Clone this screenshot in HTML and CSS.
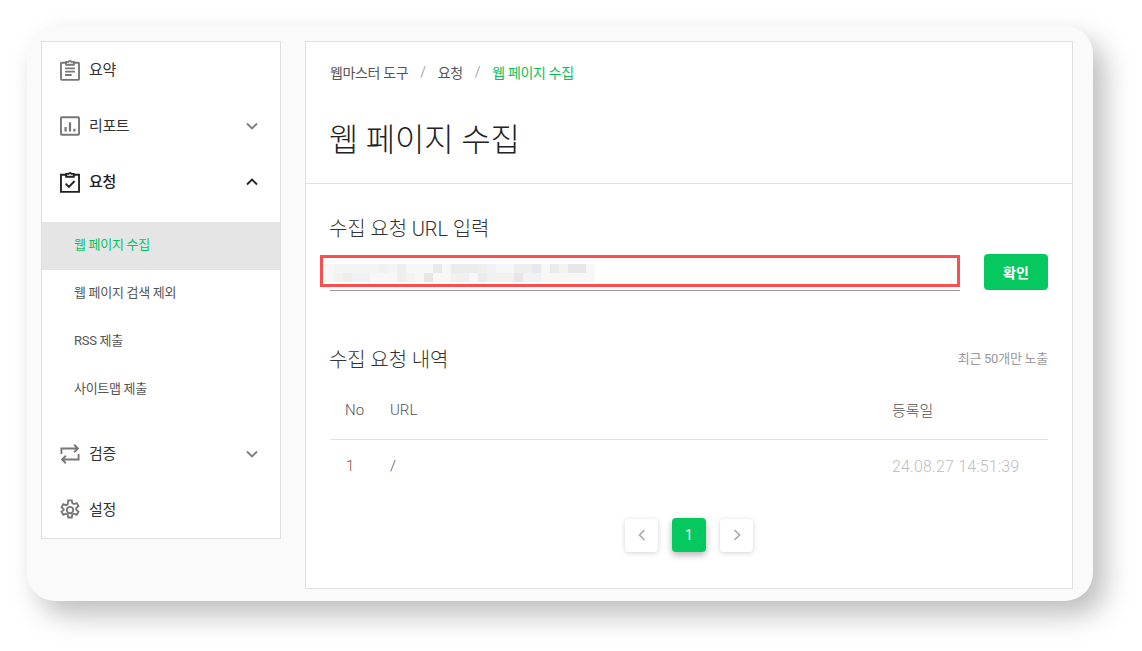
FILE: index.html
```html
<!DOCTYPE html>
<html lang="ko">
<head>
<meta charset="UTF-8">
<title>웹 페이지 수집</title>
<link rel="stylesheet" href="styles.css">
</head>
<body>
<div class="window">
  <nav class="side">
    <a class="row">
      <svg class="ico" viewBox="0 0 20 20"><path d="M6.500 3.400H2.600a.8.8 0 0 0-.8.8v14a.8.8 0 0 0 .8.800h14.800a.8.8 0 0 0 .8-.8v-14a.8.8 0 0 0-.8-.8h-3.900M6.500 2.600h2.200a1.400 1.400 0 0 1 2.600 0h2.200v2.600h-7zM5.500 8.500h9M5.500 11.500h9M5.500 14.500h6"/></svg>
      <span class="label">요약</span>
    </a>
    <a class="row">
      <svg class="ico" viewBox="0 0 20 20"><rect x="1.800" y="2" width="16.400" height="16" rx=".8"/><path d="M6 15v-4M10 15V6.500M14 15v-2.500" stroke-width="2"/></svg>
      <span class="label">리포트</span>
      <svg class="chev" viewBox="0 0 14 10"><path d="M2 2.500l5 5 5-5"/></svg>
    </a>
    <a class="row on">
      <svg class="ico" viewBox="0 0 20 20"><path d="M6.500 3.400H1.800V19h16.400V3.400h-4.700M6.500 2.600h2.200a1.400 1.400 0 0 1 2.600 0h2.200v2.600h-7zM6 11.500l3 3 5.200-5.400"/></svg>
      <span class="label">요청</span>
      <svg class="chev" viewBox="0 0 14 10"><path d="M2 7.500l5-5 5 5"/></svg>
    </a>
    <ul class="sub">
      <li class="cur">웹 페이지 수집</li>
      <li>웹 페이지 검색 제외</li>
      <li>RSS 제출</li>
      <li>사이트맵 제출</li>
    </ul>
    <a class="row">
      <svg class="ico" viewBox="0 0 20 20"><path d="M2.200 10V5h15M13.800 1.600L17.200 5l-3.400 3.400M17.800 10v5h-15M6.200 11.600L2.800 15l3.400 3.400"/></svg>
      <span class="label">검증</span>
      <svg class="chev" viewBox="0 0 14 10"><path d="M2 2.500l5 5 5-5"/></svg>
    </a>
    <a class="row">
      <svg class="ico" viewBox="0 0 20 20"><circle cx="10" cy="10" r="2.900"/><path d="M8.400 1.200h3.200l.5 2.600 1.500.8 2.500-.9 1.600 2.800-2 1.700v1.600l2 1.700-1.600 2.800-2.500-.9-1.500.8-.5 2.600H8.400l-.5-2.600-1.500-.8-2.500.9-1.600-2.800 2-1.700V9.200l-2-1.700 1.600-2.800 2.500.9 1.500-.8z"/></svg>
      <span class="label">설정</span>
    </a>
  </nav>

  <main class="panel">
    <header class="head">
      <div class="crumbs">
        <span>웹마스터 도구</span><i>/</i><span>요청</span><i>/</i><span class="now">웹 페이지 수집</span>
      </div>
      <h1>웹 페이지 수집</h1>
    </header>

    <section class="body">
      <h2>수집 요청 URL 입력</h2>
      <div class="url-row">
        <div class="url-field">
          <svg class="blur" viewBox="0 0 270 18" width="270" height="18">
            <rect width="270" height="18" fill="#f7f7f7"/>
            <rect x="9" width="45" height="9" fill="#f4f4f5"/>
            <rect x="54" width="9" height="9" fill="#f0f1f4"/>
            <rect x="63" width="9" height="9" fill="#f5f5f5"/>
            <rect x="72" width="9" height="18" fill="#eeeeee"/>
            <rect x="108" width="9" height="9" fill="#e9e9e9"/>
            <rect x="126" width="27" height="9" fill="#ececec"/>
            <rect x="153" width="9" height="9" fill="#efefef"/>
            <rect x="162" width="9" height="9" fill="#f1f2f5"/>
            <rect x="189" width="18" height="9" fill="#eeeeee"/>
            <rect x="207" width="9" height="9" fill="#e8e9ee"/>
            <rect x="225" width="9" height="9" fill="#ebebeb"/>
            <rect x="234" width="9" height="9" fill="#f3f3ef"/>
            <rect x="243" width="18" height="9" fill="#e7e7ea"/>
            <rect x="9" y="9" width="9" height="9" fill="#f1f1f1"/>
            <rect x="18" y="9" width="9" height="9" fill="#ededed"/>
            <rect x="27" y="9" width="18" height="9" fill="#f0f1f4"/>
            <rect x="81" y="9" width="9" height="9" fill="#f3f3f3"/>
            <rect x="99" y="9" width="9" height="9" fill="#e6e6e6"/>
            <rect x="126" y="9" width="18" height="9" fill="#f0f0f0"/>
            <rect x="153" y="9" width="9" height="9" fill="#e9ebf0"/>
            <rect x="162" y="9" width="27" height="9" fill="#f1f1f1"/>
            <rect x="189" y="9" width="9" height="9" fill="#e6e6e6"/>
            <rect x="198" y="9" width="18" height="9" fill="#f1f2f5"/>
          </svg>
          <div class="mark"></div>
        </div>
        <button class="ok">확인</button>
      </div>

      <div class="list-head">
        <h2>수집 요청 내역</h2>
        <span class="note">최근 50개만 노출</span>
      </div>

      <div class="tbl">
        <div class="tr th"><span class="c-no">No</span><span class="c-url">URL</span><span class="c-date">등록일</span></div>
        <div class="tr td"><span class="c-no">1</span><span class="c-url">/</span><span class="c-date">24.08.27 14:51:39</span></div>
      </div>

      <div class="pager">
        <a class="pg"><svg viewBox="0 0 10 14"><path d="M7.500 2L2.500 7l5 5"/></svg></a>
        <a class="pg cur">1</a>
        <a class="pg"><svg viewBox="0 0 10 14"><path d="M2.500 2l5 5-5 5"/></svg></a>
      </div>
    </section>
  </main>
</div>
</body>
</html>
```

FILE: styles.css
```css
* { box-sizing:border-box; }
html, body { margin:0; height:651px; background:#fff; overflow:hidden; }
body { padding:26px 49px 50px 27px; font-family:Roboto, "Noto Sans CJK KR", sans-serif; color:#333; }
h1, h2, ul { margin:0; padding:0; font-weight:400; list-style:none; }

.window { display:flex; align-items:flex-start; gap:24px; height:575px; padding:15px 20px 12px 14px; background:#fafafa; border-radius:28px; box-shadow:12px 14px 28px rgba(0,0,0,.26); }

/* sidebar */
.side { flex:none; width:240px; height:498px; background:#fff; border:1px solid #e0e0e0; }
.row { display:flex; align-items:center; height:56px; padding:0 21px 4px 17px; font-size:15px; letter-spacing:-.4px; color:#333; }
.row.on { font-weight:500; color:#222; }
.label { margin-left:8px; flex:1; }
.ico { width:22px; height:22px; margin-top:4px; fill:none; stroke:#777; stroke-width:1.7; }
.on .ico { stroke:#222; }
.chev { width:14px; height:10px; margin-top:4px; fill:none; stroke:#7d7d7d; stroke-width:1.9; }
.on .chev { stroke:#222; }
.sub { padding:12px 0; }
.sub li { height:48px; line-height:46px; padding-left:32px; font-size:13px; letter-spacing:-.3px; color:#555; }
.sub .cur { background:#e5e5e5; color:#05c15c; }

/* main panel */
.panel { flex:none; width:768px; height:548px; background:#fff; border:1px solid #e0e0e0; }
.head { height:142px; padding:20px 24px 0; border-bottom:1px solid #e0e0e0; }
.crumbs { display:flex; height:20px; align-items:center; font-size:14px; letter-spacing:-.35px; color:#555; }
.crumbs i { margin:0 12px; font-style:normal; color:#aaa; }
.crumbs .now { color:#05c15c; }
h1 { margin:35px 0 0 -1px; font-size:32px; line-height:46px; font-weight:300; color:#222; letter-spacing:-.2px; }

.body { padding:32px 24px 0; }
h2 { margin-left:-1px; font-size:20px; line-height:26px; font-weight:300; color:#333; letter-spacing:-.1px; }

.url-row { display:flex; justify-content:space-between; margin-top:12px; }
.url-field { position:relative; width:630px; height:37px; border-bottom:1px solid #999; }
.blur { display:block; margin-left:-5px; position:relative; top:10px; }
.mark { position:absolute; left:-10px; top:1px; width:640px; height:32px; border:3px solid #fb4e4e; }
.ok { width:64px; height:36px; border:0; border-radius:4px; background:#05c95f; color:#fff; font:700 14px Roboto, "Noto Sans CJK KR", sans-serif; }

.list-head { display:flex; justify-content:space-between; align-items:center; margin-top:56px; }
.note { font-size:13px; letter-spacing:-.25px; color:#999; margin-top:-5px; }

.tbl { margin-top:11px; font-size:15px; font-weight:300; }
.tr { display:flex; align-items:center; }
.th { height:56px; padding-bottom:4px; border-bottom:1px solid #e0e0e0; color:#555; }
.td { height:52px; color:#555; }
.c-no { width:60px; padding-left:15px; }
.c-url { flex:1; }
.c-date { width:156px; }
.td .c-no { padding-left:16px; color:#7a5050; }
.td .c-date { font-size:16px; color:#bebebe; letter-spacing:.15px; }

.pager { display:flex; justify-content:center; align-items:center; gap:14px; margin-top:26px; }
.pg { display:flex; align-items:center; justify-content:center; width:33px; height:33px; border-radius:4px; background:#fff; box-shadow:0 1px 5px rgba(0,0,0,.18); }
.pg svg { width:10px; height:14px; fill:none; stroke:#aaa; stroke-width:1.7; }
.pg.cur { width:34px; height:34px; background:#05c95f; color:#fff; font-size:14px; box-shadow:0 3px 7px rgba(0,0,0,.3); }
```
